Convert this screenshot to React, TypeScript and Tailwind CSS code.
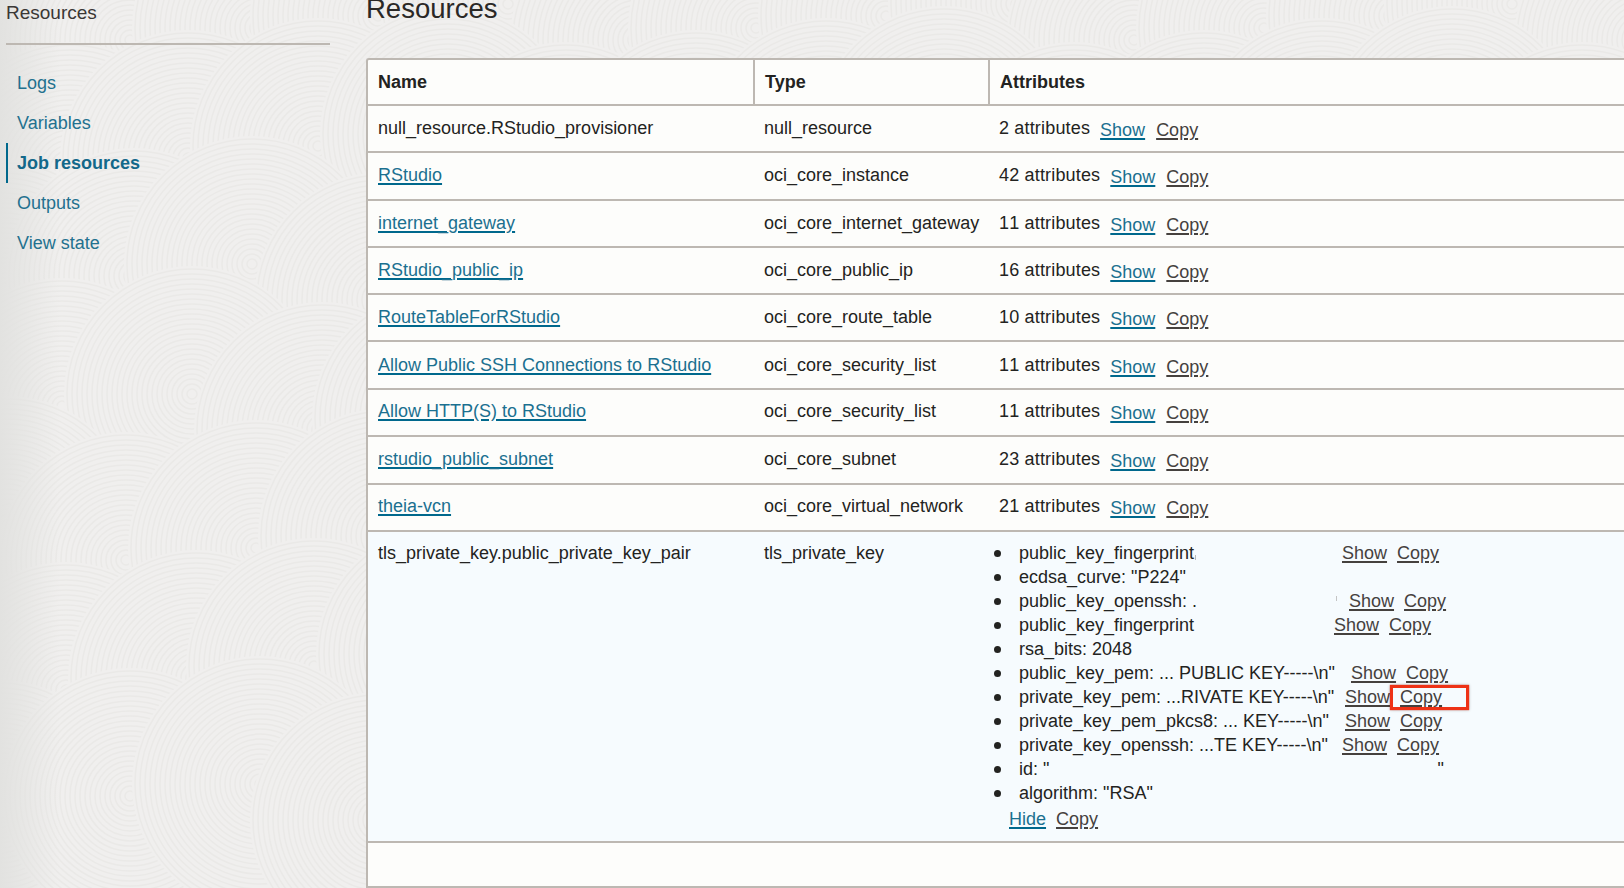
// spiral discs of the page texture, later ones paint over earlier ones
const discs = Array.from({ length: 7 }, (_, row) =>
  Array.from({ length: 14 }, (_, col) => ({
    x: col * 126 + (row % 2 ? 62 : 0) + ((col * 7 + row * 5) % 3) * 4,
    y: row * 130 + 124 + ((col * 11 + row * 3) % 4) * 12 - 120,
  })),
).flat()

function Background() {
  return (
    <div className="absolute inset-0 bg-[#f0efee]">
      <svg className="absolute inset-0" width="1624" height="888" fill="none" stroke="#eae9e7" strokeWidth="1.5">
        {discs.map((d) => (
          <g key={`${d.x}-${d.y}`}>
            <circle cx={d.x} cy={d.y} r={128} fill="#f0efee" stroke="none" />
            {Array.from({ length: 25 }, (_, i) => (
              <circle key={i} cx={d.x} cy={d.y} r={(i + 1) * 5} />
            ))}
          </g>
        ))}
      </svg>
      <div className="absolute inset-y-0 left-0 w-[60px] bg-gradient-to-r from-[#e2e2e0] to-transparent" />
    </div>
  )
}

const rows = [
  { name: "null_resource.RStudio_provisioner", link: false, type: "null_resource", count: "2 attributes", h: "h-[47px]", pad: "pt-[2px]" },
  { name: "RStudio", link: true, type: "oci_core_instance", count: "42 attributes", h: "h-[48px]", lift: true },
  { name: "internet_gateway", link: true, type: "oci_core_internet_gateway", count: "11 attributes", h: "h-[47px]", pad: "pt-[2px]" },
  { name: "RStudio_public_ip", link: true, type: "oci_core_public_ip", count: "16 attributes", h: "h-[47px]", pad: "pt-[2px]" },
  { name: "RouteTableForRStudio", link: true, type: "oci_core_route_table", count: "10 attributes", h: "h-[47px]", pad: "pt-[2px]" },
  { name: "Allow Public SSH Connections to RStudio", link: true, type: "oci_core_security_list", count: "11 attributes", h: "h-[48px]", pad: "pt-[2px]" },
  { name: "Allow HTTP(S) to RStudio", link: true, type: "oci_core_security_list", count: "11 attributes", h: "h-[47px]", lift: true },
  { name: "rstudio_public_subnet", link: true, type: "oci_core_subnet", count: "23 attributes", h: "h-[48px]", lift: true },
  { name: "theia-vcn", link: true, type: "oci_core_virtual_network", count: "21 attributes", h: "h-[47px]", lift: true },
]

const attrs = [
  { label: "public_key_fingerprint", w: "w-[323px]", mark: "tail" },
  { label: 'ecdsa_curve: "P224"' },
  { label: "public_key_openssh: .", w: "w-[330px]", mark: "tick" },
  { label: "public_key_fingerprint", w: "w-[315px]" },
  { label: "rsa_bits: 2048" },
  { label: 'public_key_pem: ... PUBLIC KEY-----\\n"', w: "w-[332px]" },
  { label: 'private_key_pem: ...RIVATE KEY-----\\n"', w: "w-[326px]", boxed: true },
  { label: 'private_key_pem_pkcs8: ... KEY-----\\n"', w: "w-[326px]" },
  { label: 'private_key_openssh: ...TE KEY-----\\n"', w: "w-[323px]" },
  { label: 'id: "', w: "w-[425px]", quote: true },
  { label: 'algorithm: "RSA"' },
]

const teal = "text-[#1b7090] underline decoration-[#00688c] decoration-2 underline-offset-2"
const grey = "text-[#45413e] underline decoration-[#45413e] decoration-2 underline-offset-2"
const cell = "border-b-2 border-[#bdb8b2] px-[10px] align-middle"

function Actions({ label = "Show", active = false, gap = "ml-[10px]" }: { label?: string; active?: boolean; gap?: string }) {
  return (
    <>
      <a className={active ? teal : grey}>{label}</a>
      <a className={`${gap} ${grey}`}>Copy</a>
    </>
  )
}

export default function App() {
  return (
    <div className="relative h-[888px] overflow-hidden font-['Liberation_Sans',Arial,sans-serif] text-[18px] text-[#232321]">
      <Background />
      <div className="relative flex h-full">
        <aside className="w-[366px] shrink-0 pl-[6px]">
          <div className="mt-px w-[324px] border-b-2 border-[#bdb8b2] pb-[18px] text-[19px] leading-[24px] text-[#3a3735]">Resources</div>
          <nav className="mt-[18px] flex w-[324px] flex-col text-[#23718f]">
            <a className="flex h-10 items-center pl-[11px]">Logs</a>
            <a className="flex h-10 items-center pl-[11px]">Variables</a>
            <a className="flex h-10 items-center border-l-2 border-[#00688c] pl-[9px] font-bold text-[#13688a]">Job resources</a>
            <a className="flex h-10 items-center pl-[11px]">Outputs</a>
            <a className="flex h-10 items-center pl-[11px]">View state</a>
          </nav>
        </aside>
        <main className="min-w-0 flex-1">
          <h1 className="-mt-[7px] h-[65px] text-[27.5px] leading-[32px] font-normal text-[#2a2826]">Resources</h1>
          <div className="rounded-tl-[3px] border-t-2 border-l-2 border-[#bdb8b2] bg-[#fdfdfb]">
            <table className="w-full table-fixed border-separate border-spacing-0">
              <colgroup>
                <col className="w-[387px]" />
                <col className="w-[235px]" />
                <col />
              </colgroup>
              <thead>
                <tr className="h-[46px] text-left font-bold">
                  <th className={`${cell} border-r-2`}>Name</th>
                  <th className={`${cell} border-r-2`}>Type</th>
                  <th className={cell}>Attributes</th>
                </tr>
              </thead>
              <tbody>
                {rows.map((r) => (
                  <tr key={r.name} className={r.h}>
                    <td className={`${cell} ${r.lift ? "pb-[2px]" : ""}`}>{r.link ? <a className={teal}>{r.name}</a> : r.name}</td>
                    <td className={`${cell} pl-[9px] ${r.lift ? "pb-[2px]" : ""}`}>{r.type}</td>
                    <td className={`${cell} pl-[9px] ${r.pad ?? ""}`}>
                      <span className="tracking-[0.17px] [font-kerning:none]">{r.count}</span>
                      <span className="ml-[10px] inline-block align-[-2px]">
                        <Actions active gap="ml-[11px]" />
                      </span>
                    </td>
                  </tr>
                ))}
                <tr className="h-[311px] bg-[#f6fbfe]">
                  <td className={`${cell} !align-top pt-[8px]`}>tls_private_key.public_private_key_pair</td>
                  <td className={`${cell} !align-top pl-[9px] pt-[8px]`}>tls_private_key</td>
                  <td className={`${cell} !align-top pl-[4px] pt-[9px]`}>
                    <ul>
                      {attrs.map((a, i) => (
                        <li key={i} className="flex h-6 items-center">
                          <span className="mr-[18px] size-[7px] shrink-0 rounded-full bg-[#232321]" />
                          <span className={`flex shrink-0 items-center ${a.w ?? ""}`}>
                            {a.label}
                            {a.mark === "tail" && <span className="ml-px mt-[8px] h-[5px] w-px bg-[#b9b9b9]" />}
                            {a.mark === "tick" && <span className="ml-auto mr-[12px] mb-[6px] h-[5px] w-px bg-[#c4c4c4]" />}
                            {a.quote && <span className="ml-auto">&quot;</span>}
                          </span>
                          {a.quote ? null : a.w ? (
                            <span className="relative">
                              <Actions />
                              {a.boxed && <span className="absolute top-px left-[45px] h-[25px] w-[79px] border-[3px] border-[#ee3216] shadow-[0_0_1px_#ee3216,0_0_3px_rgba(0,0,0,0.25)]" />}
                            </span>
                          ) : null}
                        </li>
                      ))}
                    </ul>
                    <div className="mt-px ml-[15px]">
                      <Actions label="Hide" active />
                    </div>
                  </td>
                </tr>
                <tr className="h-[45px]">
                  <td className={cell} colSpan={3} />
                </tr>
              </tbody>
            </table>
          </div>
        </main>
      </div>
    </div>
  )
}
